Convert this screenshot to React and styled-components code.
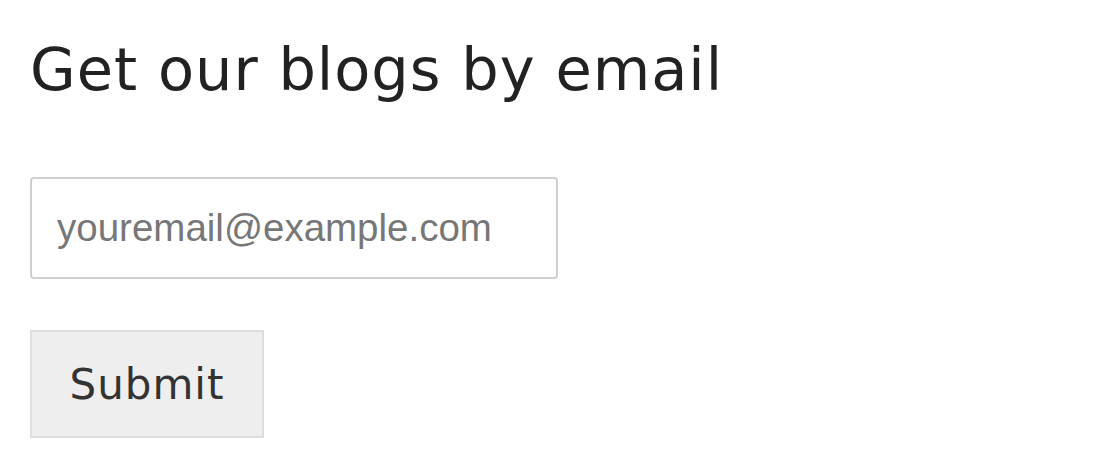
import React from "react";
import styled, { createGlobalStyle } from "styled-components";

const GlobalStyle = createGlobalStyle`
  body {
    margin: 0;
    background: #fff;
  }
`;

const Wrapper = styled.div`
  padding: 30px 30px 0 30px;
  font-family: "DejaVu Sans", "Open Sans", sans-serif;
`;

const Title = styled.h2`
  margin: 0 0 67px 0;
  font-size: 59px;
  font-weight: 400;
  letter-spacing: 1px;
  line-height: 80px;
  color: #222;
`;

const Form = styled.form`
  display: flex;
  flex-direction: column;
  align-items: flex-start;
  gap: 51px;
`;

const EmailInput = styled.input`
  box-sizing: border-box;
  width: 528px;
  height: 102px;
  padding: 0 25px;
  border: 2px solid #cfcfcf;
  border-radius: 4px;
  font-family: "Liberation Sans", Arial, sans-serif;
  font-size: 38.5px;
  color: #333;
  outline: none;
  &::placeholder {
    color: #777;
  }
`;

const SubmitButton = styled.button`
  box-sizing: border-box;
  width: 234px;
  height: 108px;
  border: 2px solid #ddd;
  border-radius: 0;
  background: #eee;
  font-family: "DejaVu Sans", "Open Sans", sans-serif;
  font-size: 42px;
  letter-spacing: 1px;
  color: #333;
  cursor: pointer;
`;

export default function App() {
  return (
    <>
      <GlobalStyle />
      <Wrapper>
        <Title>Get our blogs by email</Title>
        <Form onSubmit={e => e.preventDefault()}>
          <EmailInput type="email" placeholder="youremail@example.com" />
          <SubmitButton type="submit">Submit</SubmitButton>
        </Form>
      </Wrapper>
    </>
  );
}
